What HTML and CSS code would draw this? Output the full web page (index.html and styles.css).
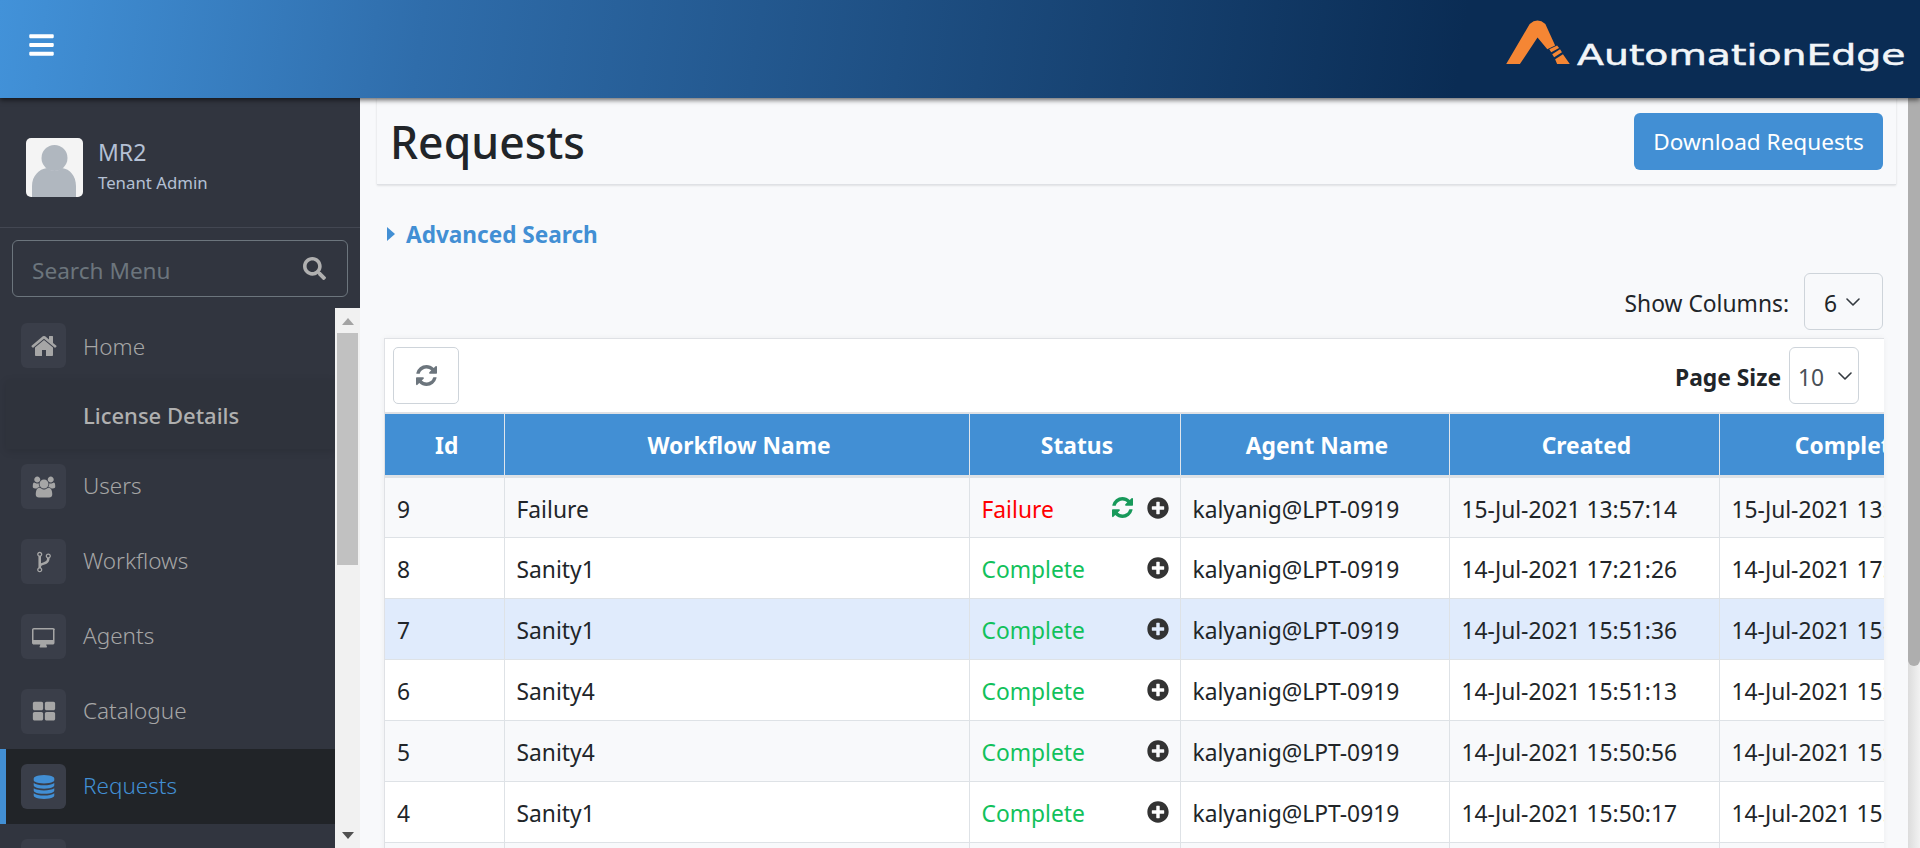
FILE: index.html
```html
<!DOCTYPE html>
<html lang="en">
<head>
    <meta charset="UTF-8">
    <meta name="viewport" content="width=device-width, initial-scale=1.0">
    <title>Requests</title>
    <link rel="stylesheet" href="styles.css">
</head>
<body>
    <svg class="sprite" xmlns="http://www.w3.org/2000/svg">
        <symbol id="i-bars" viewBox="0 0 448 512"><path d="M16 132h416c8.837 0 16-7.163 16-16V76c0-8.837-7.163-16-16-16H16C7.163 60 0 67.163 0 76v40c0 8.837 7.163 16 16 16zm0 160h416c8.837 0 16-7.163 16-16v-40c0-8.837-7.163-16-16-16H16c-8.837 0-16 7.163-16 16v40c0 8.837 7.163 16 16 16zm0 160h416c8.837 0 16-7.163 16-16v-40c0-8.837-7.163-16-16-16H16c-8.837 0-16 7.163-16 16v40c0 8.837 7.163 16 16 16z"/></symbol>
        <symbol id="i-search" viewBox="0 0 512 512"><path d="M505 442.7L405.3 343c-4.5-4.5-10.6-7-17-7H372c27.6-35.3 44-79.7 44-128C416 93.1 322.9 0 208 0S0 93.1 0 208s93.1 208 208 208c48.3 0 92.7-16.4 128-44v16.3c0 6.4 2.5 12.5 7 17l99.7 99.7c9.4 9.4 24.6 9.4 33.9 0l28.3-28.3c9.4-9.4 9.4-24.6.1-34zM208 336c-70.7 0-128-57.2-128-128 0-70.7 57.2-128 128-128 70.7 0 128 57.2 128 128 0 70.7-57.2 128-128 128z"/></symbol>
        <symbol id="i-plus" viewBox="0 0 512 512"><path d="M256 8C119 8 8 119 8 256s111 248 248 248 248-111 248-248S393 8 256 8zm144 276c0 6.6-5.4 12-12 12h-92v92c0 6.600-5.400 12-12 12h-56c-6.600 0-12-5.400-12-12v-92h-92c-6.600 0-12-5.400-12-12v-56c0-6.600 5.400-12 12-12h92v-92c0-6.600 5.400-12 12-12h56c6.600 0 12 5.400 12 12v92h92c6.600 0 12 5.400 12 12v56z"/></symbol>
        <symbol id="i-refresh" viewBox="128 128 1536 1536"><path d="M1639 1056q0 5-1 7-64 268-268 434.500t-478 166.500q-146 0-282.500-55t-243.500-157l-129 129q-19 19-45 19t-45-19-19-45v-448q0-26 19-45t45-19h448q26 0 45 19t19 45-19 45l-137 137q71 66 161 102t187 36q134 0 250-65t186-179q11-17 53-117 8-23 30-23h192q13 0 22.500 9.500t9.500 22.500zm25-800v448q0 26-19 45t-45 19h-448q-26 0-45-19t-19-45 19-45l138-138q-148-137-349-137-134 0-250 65t-186 179q-11 17-53 117-8 23-30 23h-199q-13 0-22.500-9.500t-9.500-22.500v-7q65-268 270-434.500t480-166.500q146 0 284 55.500t245 156.500l130-129q19-19 45-19t45 19 19 45z"/></symbol>
        <symbol id="i-home" viewBox="0 0 1792 1792"><path d="M1472 992v480q0 26-19 45t-45 19h-384v-384h-256v384h-384q-26 0-45-19t-19-45v-480q0-1 .5-3t.5-3l575-474 575 474q1 2 1 6zm223-69l-62 74q-8 9-21 11h-3q-13 0-21-7l-692-577-692 577q-12 8-24 7-13-2-21-11l-62-74q-8-10-7-23.500t11-21.500l719-599q32-26 76-26t76 26l244 204v-195q0-14 9-23t23-9h192q14 0 23 9t9 23v408l219 182q10 8 11 21.500t-7 23.500z"/></symbol>
        <symbol id="i-users" viewBox="0 0 2048 1792"><path d="M657 896q-162 5-265 128h-134q-82 0-138-40.500t-56-118.500q0-353 124-353 6 0 43.500 21t97.500 42.500 119 21.500q67 0 133-23-5 37-5 66 0 139 81 256zm1071 637q0 120-73 189.500t-194 69.500h-874q-121 0-194-69.500t-73-189.500q0-53 3.500-103.500t14-109 26.500-108.500 43-97.500 62-81 85.500-53.500 111.500-20q10 0 43 21.500t73 48 107 48 135 21.500 135-21.500 107-48 73-48 43-21.500q61 0 111.500 20t85.500 53.500 62 81 43 97.500 26.500 108.500 14 109 3.500 103.500zm-1024-1277q0 106-75 181t-181 75-181-75-75-181 75-181 181-75 181 75 75 181zm704 384q0 159-112.500 271.500t-271.500 112.500-271.500-112.500-112.500-271.500 112.500-271.500 271.500-112.500 271.500 112.500 112.500 271.500zm576 225q0 78-56 118.500t-138 40.500h-134q-103-123-265-128 81-117 81-256 0-29-5-66 66 23 133 23 59 0 119-21.500t97.500-42.500 43.500-21q124 0 124 353zm-128-609q0 106-75 181t-181 75-181-75-75-181 75-181 181-75 181 75 75 181z"/></symbol>
        <symbol id="i-fork" viewBox="0 0 1792 1792"><path d="M672 1472q0-40-28-68t-68-28-68 28-28 68 28 68 68 28 68-28 28-68zm0-1152q0-40-28-68t-68-28-68 28-28 68 28 68 68 28 68-28 28-68zm640 128q0-40-28-68t-68-28-68 28-28 68 28 68 68 28 68-28 28-68zm96 0q0 52-26 96.500t-70 69.500q-2 287-226 414-67 38-203 81-128 40-169.500 71t-41.500 100v26q44 25 70 69.500t26 96.500q0 80-56 136t-136 56-136-56-56-136q0-52 26-96.500t70-69.500v-820q-44-25-70-69.500t-26-96.500q0-80 56-136t136-56 136 56 56 136q0 52-26 96.500t-70 69.500v497q54-26 154-57 55-17 87.500-29.500t70.500-31 59-39.500 40.500-51 28-69.500 8.500-91.500q-44-25-70-69.500t-26-96.500q0-80 56-136t136-56 136 56 56 136z"/></symbol>
        <symbol id="i-desktop" viewBox="-128 0 2048 1792"><path d="M1664 1120v-832q0-13-9.500-22.500t-22.500-9.500h-1600q-13 0-22.500 9.500t-9.500 22.500v832q0 13 9.500 22.500t22.500 9.500h1600q13 0 22.500-9.500t9.500-22.500zm128-832v1088q0 66-47 113t-113 47h-544q0 37 16 77.500t32 71 16 43.500q0 26-19 45t-45 19h-512q-26 0-45-19t-19-45q0-14 16-44t32-70 16-78h-544q-66 0-113-47t-47-113v-1088q0-66 47-113t113-47h1632q66 0 113 47t47 113z"/></symbol>
        <symbol id="i-grid" viewBox="0 0 1792 1792"><path d="M832 1024v384q0 52-38 90t-90 38h-512q-52 0-90-38t-38-90v-384q0-52 38-90t90-38h512q52 0 90 38t38 90zm0-768v384q0 52-38 90t-90 38h-512q-52 0-90-38t-38-90v-384q0-52 38-90t90-38h512q52 0 90 38t38 90zm896 768v384q0 52-38 90t-90 38h-512q-52 0-90-38t-38-90v-384q0-52 38-90t90-38h512q52 0 90 38t38 90zm0-768v384q0 52-38 90t-90 38h-512q-52 0-90-38t-38-90v-384q0-52 38-90t90-38h512q52 0 90 38t38 90z"/></symbol>
        <symbol id="i-database" viewBox="0 0 1792 1792"><path d="M896 768q237 0 443-43t325-127v170q0 69-103 128t-280 93.500-385 34.500-385-34.500-280-93.500-103-128v-170q119 84 325 127t443 43zm0 768q237 0 443-43t325-127v170q0 69-103 128t-280 93.500-385 34.500-385-34.500-280-93.500-103-128v-170q119 84 325 127t443 43zm0-384q237 0 443-43t325-127v170q0 69-103 128t-280 93.500-385 34.500-385-34.500-280-93.500-103-128v-170q119 84 325 127t443 43zm0-1152q208 0 385 34.500t280 93.500 103 128v128q0 69-103 128t-280 93.500-385 34.500-385-34.500-280-93.500-103-128v-128q0-69 103-128t280-93.500 385-34.500z"/></symbol>
        <symbol id="i-chevron" viewBox="0 0 14 8"><path d="M1 1l6 6 6-6" fill="none" stroke="currentColor" stroke-width="1.6" stroke-linecap="round" stroke-linejoin="round"/></symbol>
    </svg>

    <div class="app">
        <header class="topbar">
            <svg class="icon menu-toggle"><use href="#i-bars"/></svg>
            <div class="logo">
                <svg class="logo-mark" viewBox="0 0 66 46">
                    <path d="M0 45L24 4Q32 -3 40 4L50 26L42 30L32 18L14 45Z" fill="#f58634"/>
                    <path d="M44 30L52 26L54 28.500L46 33ZM47 35L55 30L57 33L49 38ZM50 40L58 35L65 45L52 45Z" fill="#f58634"/>
                </svg>
                <span class="logo-text">AutomationEdge</span>
            </div>
        </header>

        <div class="body-row">
            <aside class="sidebar">
                <div class="user-panel">
                    <div class="avatar">
                        <svg viewBox="0 0 57 59">
                            <circle cx="28.500" cy="20" r="13" fill="#b0b7bf"/>
                            <path d="M6 59V48C6 38 13 31 21 30Q28.500 36 36 30C44 31 50 38 50 48V59Z" fill="#b0b7bf"/>
                        </svg>
                    </div>
                    <div class="user-info">
                        <div class="user-name">MR2</div>
                        <div class="user-role">Tenant Admin</div>
                    </div>
                </div>
                <div class="menu-search">
                    <div class="search-box">
                        <span>Search Menu</span>
                        <svg class="icon"><use href="#i-search"/></svg>
                    </div>
                </div>
                <div class="menu-wrap">
                    <ul class="menu">
                        <li class="menu-item"><span class="menu-icon"><svg class="icon home-icon"><use href="#i-home"/></svg></span><span class="menu-label home-label">Home</span></li>
                        <li class="menu-sub">License Details</li>
                        <li class="menu-item"><span class="menu-icon"><svg class="icon"><use href="#i-users"/></svg></span><span class="menu-label">Users</span></li>
                        <li class="menu-item"><span class="menu-icon"><svg class="icon"><use href="#i-fork"/></svg></span><span class="menu-label">Workflows</span></li>
                        <li class="menu-item"><span class="menu-icon"><svg class="icon"><use href="#i-desktop"/></svg></span><span class="menu-label">Agents</span></li>
                        <li class="menu-item"><span class="menu-icon"><svg class="icon"><use href="#i-grid"/></svg></span><span class="menu-label">Catalogue</span></li>
                        <li class="menu-item active"><span class="menu-icon"><svg class="icon"><use href="#i-database"/></svg></span><span class="menu-label">Requests</span></li>
                        <li class="menu-item"><span class="menu-icon"></span></li>
                    </ul>
                    <div class="menu-scroll">
                        <span class="arrow-up"></span>
                        <span class="menu-thumb"></span>
                        <span class="arrow-down"></span>
                    </div>
                </div>
            </aside>

            <main class="content">
                <div class="page-title">
                    <h1>Requests</h1>
                    <button class="btn-primary">Download Requests</button>
                </div>

                <div class="advanced-search"><span class="caret"></span>Advanced Search</div>

                <div class="columns-row">
                    <span class="nudge">Show Columns:</span>
                    <div class="select columns-select"><span class="nudge">6</span><svg class="chevron"><use href="#i-chevron"/></svg></div>
                </div>

                <div class="table-card">
                    <div class="toolbar">
                        <button class="btn-refresh"><svg class="icon"><use href="#i-refresh"/></svg></button>
                        <div class="page-size">
                            <b class="nudge">Page Size</b>
                            <div class="select size-select"><span class="nudge">10</span><svg class="chevron"><use href="#i-chevron"/></svg></div>
                        </div>
                    </div>
                    <div class="table-clip">
                        <table>
                            <colgroup>
                                <col class="c-id"><col class="c-name"><col class="c-status"><col class="c-agent"><col class="c-date"><col class="c-date">
                            </colgroup>
                            <thead>
                                <tr><th>Id</th><th>Workflow Name</th><th>Status</th><th>Agent Name</th><th>Created</th><th>Completed</th></tr>
                            </thead>
                            <tbody>
                                <tr class="odd">
                                    <td>9</td><td>Failure</td>
                                    <td><div class="status"><span class="failure">Failure</span><span class="row-actions"><svg class="icon retry"><use href="#i-refresh"/></svg><svg class="icon plus"><use href="#i-plus"/></svg></span></div></td>
                                    <td>kalyanig@LPT-0919</td><td>15-Jul-2021 13:57:14</td><td>15-Jul-2021 13:57:14</td>
                                </tr>
                                <tr>
                                    <td>8</td><td>Sanity1</td>
                                    <td><div class="status"><span class="complete">Complete</span><span class="row-actions"><svg class="icon plus"><use href="#i-plus"/></svg></span></div></td>
                                    <td>kalyanig@LPT-0919</td><td>14-Jul-2021 17:21:26</td><td>14-Jul-2021 17:21:26</td>
                                </tr>
                                <tr class="selected">
                                    <td>7</td><td>Sanity1</td>
                                    <td><div class="status"><span class="complete">Complete</span><span class="row-actions"><svg class="icon plus"><use href="#i-plus"/></svg></span></div></td>
                                    <td>kalyanig@LPT-0919</td><td>14-Jul-2021 15:51:36</td><td>14-Jul-2021 15:51:36</td>
                                </tr>
                                <tr>
                                    <td>6</td><td>Sanity4</td>
                                    <td><div class="status"><span class="complete">Complete</span><span class="row-actions"><svg class="icon plus"><use href="#i-plus"/></svg></span></div></td>
                                    <td>kalyanig@LPT-0919</td><td>14-Jul-2021 15:51:13</td><td>14-Jul-2021 15:51:13</td>
                                </tr>
                                <tr class="odd">
                                    <td>5</td><td>Sanity4</td>
                                    <td><div class="status"><span class="complete">Complete</span><span class="row-actions"><svg class="icon plus"><use href="#i-plus"/></svg></span></div></td>
                                    <td>kalyanig@LPT-0919</td><td>14-Jul-2021 15:50:56</td><td>14-Jul-2021 15:50:56</td>
                                </tr>
                                <tr>
                                    <td>4</td><td>Sanity1</td>
                                    <td><div class="status"><span class="complete">Complete</span><span class="row-actions"><svg class="icon plus"><use href="#i-plus"/></svg></span></div></td>
                                    <td>kalyanig@LPT-0919</td><td>14-Jul-2021 15:50:17</td><td>14-Jul-2021 15:50:17</td>
                                </tr>
                                <tr class="odd"><td></td><td></td><td></td><td></td><td></td><td></td></tr>
                            </tbody>
                        </table>
                    </div>
                </div>
            </main>

            <div class="page-scroll"><span class="page-thumb"></span></div>
        </div>
    </div>
</body>
</html>
```

FILE: styles.css
```css
* {
    box-sizing: border-box;
}
html, body {
    height: 100%;
    margin: 0;
    overflow: hidden;
}
body {
    font-family: "Noto Sans", "Open Sans", Arial, sans-serif;
    font-size: 22.800px;
    color: #212529;
    background: #f8f9fb;
}
.sprite {
    display: none;
}
.icon {
    display: block;
    fill: currentColor;
}
.nudge {
    padding-top: 4px;
}
.app {
    display: flex;
    flex-direction: column;
    height: 848px;
}

/* top bar */
.topbar {
    position: relative;
    z-index: 2;
    flex: 0 0 98px;
    display: flex;
    align-items: center;
    justify-content: space-between;
    padding: 0 15px 0 29px;
    background: linear-gradient(98deg, #4292d9 0%, #2f6dab 22%, #0a2c54 76%);
    box-shadow: 0 2px 5px rgba(0,0,0,0.6);
}
.menu-toggle {
    width: 25px;
    height: 28px;
    margin-bottom: 9px;
    color: #fff;
}
.logo {
    display: flex;
    align-items: flex-start;
    gap: 6px;
    height: 98px;
    padding-top: 20px;
}
.logo-mark {
    width: 65px;
    height: 45px;
}
.logo-text {
    width: 233px;
    margin: 21px 95px 0 0;
    font-family: "DejaVu Sans", sans-serif;
    font-size: 28px;
    line-height: 30px;
    color: #f2f5f8;
    white-space: nowrap;
    -webkit-text-stroke: 0.5px #f2f5f8;
    transform: scaleX(1.407);
    transform-origin: left center;
}

/* layout */
.body-row {
    flex: 1;
    display: flex;
    min-height: 0;
}
.sidebar {
    flex: 0 0 360px;
    display: flex;
    flex-direction: column;
    background: #31353f;
}
.user-panel {
    flex: 0 0 130px;
    display: flex;
    align-items: center;
    gap: 15px;
    padding: 10px 0 0 26px;
    border-bottom: 1px solid #434752;
}
.avatar {
    width: 57px;
    height: 59px;
    border-radius: 5px;
    background: #f4f4f4;
    overflow: hidden;
}
.avatar svg {
    display: block;
    width: 57px;
    height: 59px;
}
.user-info {
    padding-bottom: 1.500px;
}
.user-name {
    margin-bottom: 3.500px;
    font-size: 23px;
    line-height: 28px;
    color: #b4c0d4;
}
.user-role {
    font-size: 16.800px;
    line-height: 26px;
    color: #b4c0d4;
}
.menu-search {
    flex: 0 0 80px;
    padding: 12px 12px 0;
}
.search-box {
    display: flex;
    align-items: center;
    justify-content: space-between;
    height: 57px;
    padding: 0 21px 0 19px;
    border: 1px solid #6c757d;
    border-radius: 6px;
    font-size: 22.600px;
    color: #6c757d;
}
.search-box span {
    padding-top: 4px;
}
.search-box .icon {
    width: 23px;
    height: 23px;
    color: #b0b0b0;
}

/* menu */
.menu-wrap {
    flex: 1;
    display: flex;
    min-height: 0;
}
.menu {
    flex: 1;
    margin: 0;
    padding: 0;
    list-style: none;
    overflow: hidden;
}
.menu-item {
    display: flex;
    align-items: center;
    gap: 17px;
    height: 75px;
    padding-left: 21px;
    font-size: 22.500px;
    font-weight: 300;
    color: #a6a6a6;
}
.menu-label {
    padding-bottom: 2px;
}
.home-label {
    padding: 2px 0 0;
}
.menu-icon {
    flex: 0 0 45px;
    display: flex;
    align-items: center;
    justify-content: center;
    height: 45px;
    border-radius: 6px;
    background: #3a3e49;
}
.menu-icon .icon {
    width: 24px;
    height: 24px;
}
.menu-icon .home-icon {
    width: 28px;
    height: 28px;
}
.menu-sub {
    display: flex;
    align-items: center;
    height: 69px;
    margin: -3px 0 0 6px;
    padding-left: 77px;
    font-size: 22px;
    font-weight: 500;
    color: #b0b0b0;
    background: #2f333c;
    box-shadow: 0 2px 8px rgba(0,0,0,0.12);
}
.menu-item.active {
    padding-left: 15px;
    border-left: 6px solid #428fd4;
    background: #212428;
    color: #428fd4;
}
.menu-scroll {
    flex: 0 0 25px;
    display: flex;
    flex-direction: column;
    align-items: center;
    background: #f1f1f1;
}
.arrow-up {
    margin: 10px 0 8px;
    border: 6px solid transparent;
    border-top: 0;
    border-bottom: 7px solid #a3a3a3;
}
.menu-thumb {
    width: 21px;
    height: 232px;
    background: #c1c1c1;
}
.arrow-down {
    margin: auto 0 9px;
    border: 6px solid transparent;
    border-bottom: 0;
    border-top: 7px solid #505050;
}

/* main */
.content {
    flex: 1;
    min-width: 0;
    padding: 0 12px 0 17px;
    overflow: hidden;
}
.page-title {
    display: flex;
    align-items: center;
    justify-content: space-between;
    height: 87px;
    padding: 0 13px;
    border-bottom: 1px solid #dfe1e5;
    box-shadow: 0 1px 2px rgba(0,0,0,0.08), 1px 0 2px rgba(0,0,0,0.03), -1px 0 2px rgba(0,0,0,0.03);
}
.page-title h1 {
    margin: 0;
    font-size: 44.500px;
    font-weight: 500;
    color: #212529;
}
.btn-primary {
    width: 249px;
    height: 57px;
    border: 0;
    border-radius: 6px;
    font: inherit;
    font-size: 22.600px;
    color: #fff;
    background: #428fd4;
}
.advanced-search {
    display: flex;
    align-items: center;
    height: 34px;
    margin: 32px 0 0 10px;
    font-size: 22.600px;
    font-weight: 700;
    color: #428fd4;
}
.caret {
    margin-right: 11px;
    border: 7px solid transparent;
    border-left: 8px solid #428fd4;
    border-right: 0;
}
.columns-row {
    display: flex;
    align-items: center;
    justify-content: flex-end;
    gap: 15px;
    height: 57px;
    margin: 22px 13px 8px 0;
}
.select {
    display: flex;
    align-items: center;
    justify-content: space-between;
    height: 57px;
    border: 1px solid #ced4da;
    border-radius: 6px;
}
.columns-select {
    width: 79px;
    padding: 0 22px 0 19px;
}
.size-select {
    width: 70px;
    padding: 0 6px 0 8px;
    color: #495057;
}
.chevron {
    width: 14px;
    height: 8px;
    color: #343a40;
}

/* table */
.table-card {
    width: 1500px;
    margin-left: 7px;
    border: 1px solid #dfe1e5;
    border-width: 1px 0 0 1px;
    background: #fff;
    box-shadow: 0 0 6px rgba(0,0,0,0.05);
}
.toolbar {
    display: flex;
    align-items: center;
    justify-content: space-between;
    height: 75px;
    padding: 0 25px 0 8px;
    border-bottom: 2px solid #dfe1e5;
}
.btn-refresh {
    display: flex;
    align-items: center;
    justify-content: center;
    width: 66px;
    height: 57px;
    border: 1px solid #ced4da;
    border-radius: 5px;
    background: #fff;
    color: #6c757d;
}
.btn-refresh .icon {
    width: 21px;
    height: 21px;
}
.page-size {
    display: flex;
    align-items: center;
    gap: 8px;
}
.page-size b {
    font-weight: 700;
}
.table-clip {
    overflow: hidden;
}
table {
    width: 1604px;
    table-layout: fixed;
    border-collapse: collapse;
}
.c-id { width: 119px; }
.c-name { width: 465px; }
.c-status { width: 211px; }
.c-agent { width: 269px; }
.c-date { width: 270px; }
th {
    height: 62px;
    padding: 2px 12px 0 17px;
    font-size: 22.800px;
    font-weight: 700;
    color: #fff;
    background: #428fd4;
    border-left: 1px solid #dfe5ec;
    border-bottom: 3px solid #dee2e6;
    white-space: nowrap;
    overflow: hidden;
}
td {
    height: 61px;
    padding: 4px 12px 0;
    border: 1px solid #dee2e6;
    white-space: nowrap;
    overflow: hidden;
}
th:first-child, td:first-child {
    border-left: 0;
}
.odd {
    background: #f8f9fb;
}
.selected {
    background: #e0ebfc;
}
.status {
    display: flex;
    align-items: center;
    justify-content: space-between;
}
.failure {
    color: #ff0000;
}
.complete {
    color: #11c15b;
}
.row-actions {
    display: flex;
    align-items: center;
    gap: 14px;
    margin: -3px -1px 0 0;
}
.row-actions .retry {
    width: 21px;
    height: 21px;
}
.row-actions .plus {
    width: 22px;
    height: 22px;
}
.retry {
    color: #17995a;
}
.plus {
    color: #333;
}

/* page scrollbar */
.page-scroll {
    flex: 0 0 12px;
    background: linear-gradient(to right, #dcdcdc, #f2f2f2);
}
.page-thumb {
    display: block;
    height: 568px;
    border-radius: 0 0 6px 6px;
    background: #aeaeae;
}
```
